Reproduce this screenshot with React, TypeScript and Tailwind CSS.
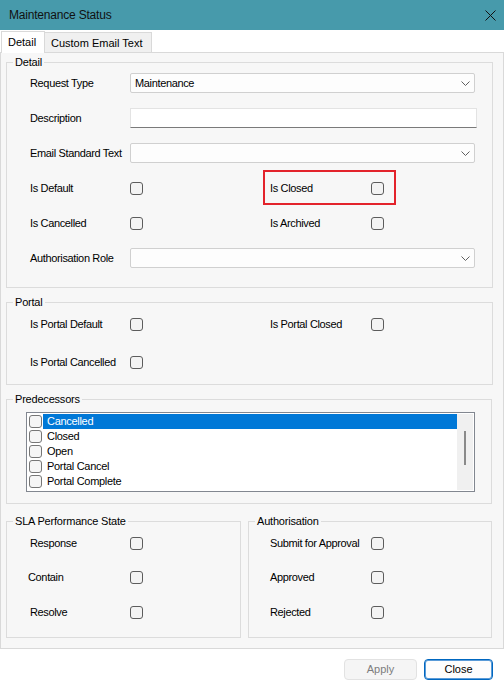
import type { JSX, ReactNode } from "react";

function Check({ light = false }: { light?: boolean }): JSX.Element {
  return (
    <span
      className={
        light
          ? "block h-[13px] w-[13px] shrink-0 rounded-[3px] border border-[#767676] bg-[#f5f5f5]"
          : "block h-[13px] w-[13px] shrink-0 rounded-[3px] border border-[#5c5c5c] bg-[#f3f3f3]"
      }
    />
  );
}

function Chevron(): JSX.Element {
  return (
    <svg width="9" height="5" viewBox="0 0 9 5" className="shrink-0">
      <path d="M0.5 0.5 L4.5 4.5 L8.5 0.5" fill="none" stroke="#5f5f5f" strokeWidth="1" />
    </svg>
  );
}

function Select({ value }: { value?: string }): JSX.Element {
  return (
    <div className="flex h-[20px] w-[345px] items-center justify-between rounded-[2px] border border-[#d0d0d0] bg-[#fdfdfd] pl-[4px] pr-[4px]">
      <span>{value}</span>
      <Chevron />
    </div>
  );
}

// fieldset keeps no padding so the legend sits at a fixed offset from the border
function Group({
  title,
  className,
  inner,
  children,
}: {
  title: string;
  className: string;
  inner: string;
  children: ReactNode;
}): JSX.Element {
  return (
    <fieldset className={`border border-[#dcdcdc] ${className}`}>
      <legend className="ml-[6px] px-[2px] leading-[14px] tracking-[-0.2px]">{title}</legend>
      <div className={inner}>{children}</div>
    </fieldset>
  );
}

function Row({ label, children }: { label: string; children: ReactNode }): JSX.Element {
  return (
    <div className="flex h-[20px] items-center">
      <span className="w-[100px] shrink-0 whitespace-nowrap">{label}</span>
      {children}
    </div>
  );
}

function CheckPair({ left, right }: { left: string; right: string }): JSX.Element {
  return (
    <div className="flex h-[20px] items-center">
      <span className="w-[100px] shrink-0 whitespace-nowrap">{left}</span>
      <Check />
      <span className="ml-[127px] w-[101px] shrink-0 whitespace-nowrap">{right}</span>
      <Check />
    </div>
  );
}

const predecessors = ["Cancelled", "Closed", "Open", "Portal Cancel", "Portal Complete"];

export default function App(): JSX.Element {
  return (
    <div className="flex h-[690px] w-[504px] flex-col overflow-hidden bg-white font-['Liberation_Sans',Arial,sans-serif] text-[11px] text-black">
      {/* title bar */}
      <div className="flex h-[30px] shrink-0 items-center justify-between bg-[#479aab] pl-[9px] pr-[8px]">
        <span className="text-[12px] tracking-[-0.2px] text-[#111]">Maintenance Status</span>
        <svg width="11" height="11" viewBox="0 0 11 11">
          <path d="M0.5 0.5 L10.5 10.5 M10.5 0.5 L0.5 10.5" stroke="#111" strokeWidth="1" />
        </svg>
      </div>

      {/* tabs */}
      <div className="flex h-[22px] shrink-0 items-end pl-[1px]">
        <div className="relative z-10 -mb-px flex h-[22px] w-[44px] items-center border border-b-0 border-[#d9d9d9] bg-white pl-[6px]">
          Detail
        </div>
        <div className="flex h-[20px] w-[107px] items-center border border-b-0 border-l-0 border-[#d9d9d9] bg-[#f0f0f0] pl-[6px] pt-[2px]">
          Custom Email Text
        </div>
      </div>

      {/* tab page */}
      <div className="h-[597px] shrink-0 border border-[#d9d9d9] bg-[#f7f7f7] pl-[5px] [&_span]:tracking-[-0.35px]">
        <Group title="Detail" className="mt-[2px] w-[487px]" inner="flex flex-col gap-[15px] pb-[19px] pl-[23px] pt-[4px]">
          <Row label="Request Type">
            <Select value="Maintenance" />
          </Row>
          <Row label="Description">
            <div className="h-[20px] w-[347px] border border-[#e3e3e3] border-b-[#7a7a7a] bg-white" />
          </Row>
          <Row label="Email Standard Text">
            <Select />
          </Row>
          <div className="flex h-[20px] items-center">
            <span className="w-[100px] shrink-0">Is Default</span>
            <Check />
            <span className="relative ml-[127px] flex items-center self-stretch">
              <span className="w-[101px] shrink-0">Is Closed</span>
              <Check />
              <span className="pointer-events-none absolute -left-[7px] -top-[8px] h-[35px] w-[133px] border-2 border-[#e3232b]" />
            </span>
          </div>
          <CheckPair left="Is Cancelled" right="Is Archived" />
          <Row label="Authorisation Role">
            <Select />
          </Row>
        </Group>

        <Group title="Portal" className="mt-[7px] w-[487px]" inner="flex flex-col gap-[18px] pb-[12px] pl-[23px] pt-[5px]">
          <CheckPair left="Is Portal Default" right="Is Portal Closed" />
          <Row label="Is Portal Cancelled">
            <Check />
          </Row>
        </Group>

        <Group title="Predecessors" className="mt-[7px] w-[486px]" inner="pb-[11px] pl-[19px] pt-[6px]">
          <div className="flex h-[80px] w-[449px] border border-[#828790] bg-white p-[1px]">
            <div className="flex flex-1 flex-col pl-[1px]">
              {predecessors.map((item, i) => (
                <div key={item} className="flex h-[15px] items-center">
                  <Check light />
                  <div
                    className={
                      i === 0
                        ? "ml-[1px] flex h-[15px] flex-1 items-center bg-[#0078d7] pl-[4px] tracking-[-0.3px] text-white"
                        : "ml-[1px] flex h-[15px] flex-1 items-center pl-[4px] tracking-[-0.3px]"
                    }
                  >
                    {item}
                  </div>
                </div>
              ))}
            </div>
            <div className="relative w-[16px] bg-[#f0f0f0]">
              <div className="absolute left-[7px] top-[17px] h-[34px] w-[2px] bg-[#8a8a8a]" />
            </div>
          </div>
        </Group>

        <div className="mt-[10px] flex gap-[7px]">
          <Group title="SLA Performance State" className="w-[235px]" inner="flex flex-col pb-[15px] pl-[23px] pt-[5px]">
            <Row label="Response">
              <Check />
            </Row>
            <div className="mt-[14px] flex h-[20px] items-center">
              <span className="-ml-[2px] w-[102px] shrink-0">Contain</span>
              <Check />
            </div>
            <div className="mt-[15px]">
              <Row label="Resolve">
                <Check />
              </Row>
            </div>
          </Group>
          <Group title="Authorisation" className="w-[244px]" inner="flex flex-col pb-[15px] pl-[21px] pt-[5px]">
            <div className="flex h-[20px] items-center">
              <span className="w-[101px] shrink-0 whitespace-nowrap">Submit for Approval</span>
              <Check />
            </div>
            <div className="mt-[14px] flex h-[20px] items-center">
              <span className="w-[101px] shrink-0">Approved</span>
              <Check />
            </div>
            <div className="mt-[15px] flex h-[20px] items-center">
              <span className="w-[101px] shrink-0">Rejected</span>
              <Check />
            </div>
          </Group>
        </div>
      </div>

      {/* footer */}
      <div className="flex justify-end gap-[7px] pr-[11px] pt-[10px]">
        <button className="flex h-[21px] w-[73px] items-center justify-center rounded-[4px] border border-[#e2e2e2] bg-[#f5f5f5] text-[#7d7d7d]">
          Apply
        </button>
        <button className="flex h-[21px] w-[69px] items-center justify-center rounded-[4px] border border-[#0067c0] bg-[#fdfdfd] shadow-[inset_0_0_0_1px_#5a9bd8]">
          Close
        </button>
      </div>
    </div>
  );
}
